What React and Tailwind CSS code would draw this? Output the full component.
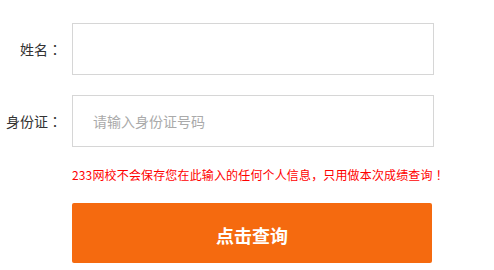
export default function App() {
  const font = { fontFamily: '"Noto Sans CJK SC", "Noto Sans", sans-serif' }
  // JP glyphs centre the full-width colon, like the original page's font
  const colon = <span className="font-['Noto_Sans_CJK_JP',sans-serif]">：</span>
  return (
    <div className="w-[494px] h-[270px] bg-white overflow-hidden" style={font}>
      <form className="flex flex-col pt-[23px]" onSubmit={e => e.preventDefault()}>
        {/* 姓名 */}
        <div className="flex items-center">
          <label className="w-[62px] mr-[10px] text-right text-[14px] leading-[20px] text-[#333]">姓名{colon}</label>
          <input
            type="text"
            className="w-[362px] h-[52px] border border-[#d6d6d6] px-[20px] text-[14px] text-[#333] outline-none"
          />
        </div>

        {/* 身份证 */}
        <div className="flex items-center mt-[20px]">
          <label className="w-[62px] mr-[10px] text-right text-[14px] leading-[20px] text-[#333]">身份证{colon}</label>
          <input
            type="text"
            placeholder="请输入身份证号码"
            className="w-[362px] h-[52px] border border-[#d6d6d6] px-[20px] text-[14px] text-[#333] placeholder:text-[#aaa] outline-none"
          />
        </div>

        <p className="ml-[72px] mt-[18px] text-[12px] leading-[20px] tracking-[0.15px] text-[#ff0000] whitespace-nowrap">
          233网校不会保存您在此输入的任何个人信息，只用做本次成绩查询<span className="font-['Noto_Sans_CJK_JP',sans-serif]">！</span>
        </p>

        <button
          type="submit"
          className="ml-[72px] mt-[18px] w-[360px] h-[60px] rounded-[2px] bg-[#f56a0f] text-white text-[18px] leading-[24px] pt-[3px] font-bold"
        >
          点击查询
        </button>
      </form>
    </div>
  )
}
